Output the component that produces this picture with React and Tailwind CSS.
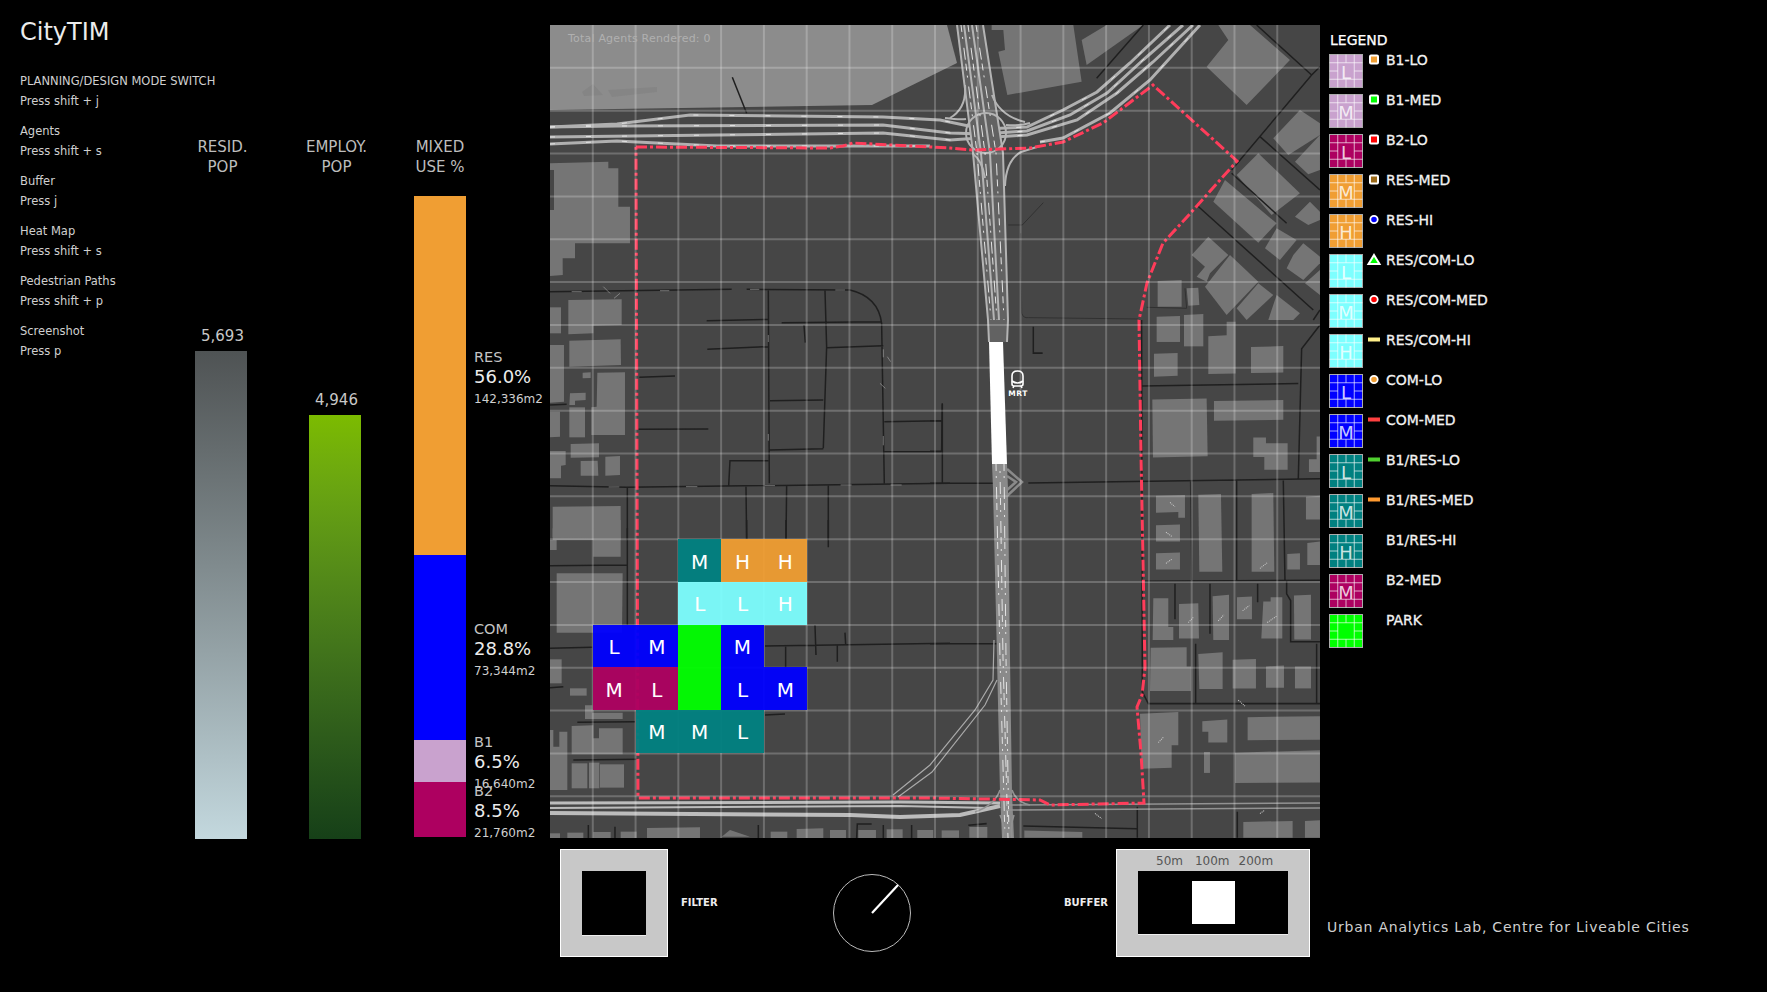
import React from "react";

const help = [
  ["PLANNING/DESIGN MODE SWITCH", "Press shift + j"],
  ["Agents", "Press shift + s"],
  ["Buffer", "Press j"],
  ["Heat Map", "Press shift + s"],
  ["Pedestrian Paths", "Press shift + p"],
  ["Screenshot", "Press p"],
];

const mix = [
  { name: "RES", pct: "56.0%", area: "142,336m2", seg: "h-[359px] bg-[#f09e33]", top: "top-[152px]" },
  { name: "COM", pct: "28.8%", area: "73,344m2", seg: "h-[185px] bg-[#0000ff]", top: "top-[65px]" },
  { name: "B1", pct: "6.5%", area: "16,640m2", seg: "h-[42px] bg-[#c9a2ce]", top: "top-[-7px]" },
  { name: "B2", pct: "8.5%", area: "21,760m2", seg: "h-[55px] bg-[#ad0060]", top: "top-0" },
];

const legend = [
  ["B1-LO", "#c9a2ce", "L", "sq", "#f09e33"],
  ["B1-MED", "#c9a2ce", "M", "sq", "#00ff00"],
  ["B2-LO", "#ad0060", "L", "sq", "#ff0000"],
  ["RES-MED", "#f09e33", "M", "sq", "#9c6a18"],
  ["RES-HI", "#f09e33", "H", "ci", "#0000ff"],
  ["RES/COM-LO", "#7dffff", "L", "tr", "#00ff00"],
  ["RES/COM-MED", "#7dffff", "M", "ci", "#ff0000"],
  ["RES/COM-HI", "#7dffff", "H", "li", "#ffef8a"],
  ["COM-LO", "#0000ff", "L", "ci", "#f09e33"],
  ["COM-MED", "#0000ff", "M", "li", "#ff4040"],
  ["B1/RES-LO", "#008080", "L", "li", "#50d030"],
  ["B1/RES-MED", "#008080", "M", "li", "#ff9a30"],
  ["B1/RES-HI", "#008080", "H", "", ""],
  ["B2-MED", "#ad0060", "M", "", ""],
  ["PARK", "#00ff00", "", "", ""],
];

const tiles = [
  ["col-start-4 row-start-13 bg-[#008080]/95", "M"],
  ["col-start-5 row-start-13 bg-[#f09e33]/95", "H"],
  ["col-start-6 row-start-13 bg-[#f09e33]/95", "H"],
  ["col-start-4 row-start-14 bg-[#7dffff]/95", "L"],
  ["col-start-5 row-start-14 bg-[#7dffff]/95", "L"],
  ["col-start-6 row-start-14 bg-[#7dffff]/95", "H"],
  ["col-start-2 row-start-15 bg-[#0000ff]/95", "L"],
  ["col-start-3 row-start-15 bg-[#0000ff]/95", "M"],
  ["col-start-4 row-start-15 bg-[#00ff00]/95", ""],
  ["col-start-5 row-start-15 bg-[#0000ff]/95", "M"],
  ["col-start-2 row-start-16 bg-[#ad0060]/95", "M"],
  ["col-start-3 row-start-16 bg-[#ad0060]/95", "L"],
  ["col-start-4 row-start-16 bg-[#00ff00]/95", ""],
  ["col-start-5 row-start-16 bg-[#0000ff]/95", "L"],
  ["col-start-6 row-start-16 bg-[#0000ff]/95", "M"],
  ["col-start-3 row-start-17 bg-[#008080]/95", "M"],
  ["col-start-4 row-start-17 bg-[#008080]/95", "M"],
  ["col-start-5 row-start-17 bg-[#008080]/95", "L"],
];

/* Map drawing: shapes are kept in the coordinates of crops, each group re-scales them */
const bZ10 = [
  "55,90 215,88 215,165 130,167 130,190 55,193", "0,112 33,112 33,190 0,190", "58,212 212,208 213,285 58,290",
  "0,225 42,225 42,395 0,398", "98,308 122,307 122,324 98,325", "142,308 225,307 225,495 124,495 124,412 140,410",
  "60,370 107,368 107,390 75,392 75,405 58,405", "58,412 105,412 105,502 58,502", "0,425 30,425 30,500 0,502",
  "62,522 147,520 147,562 62,563", "0,543 47,543 47,585 33,587 33,625 0,625", "92,573 143,572 145,617 92,617",
  "166,560 210,558 210,615 166,617", "8,710 212,708 212,810 8,810", "0,0 37,0 37,15 0,15",
];
const rZ10 = "M0 65 L545 58 M590 58 L900 60 Q985 80 995 160 L1003 640 M655 60 L658 640 M825 60 L830 230 L820 535 M470 152 L655 148 M695 158 L993 155 M472 238 L655 230 M762 165 L766 218 M830 233 L1000 227 M268 322 L375 318 M660 392 L820 390 M265 478 L475 477 M658 540 L820 536 M655 572 L540 572 L536 648 M0 647 L230 652 L1200 640 M232 652 L232 810 M588 650 L590 810 M710 648 L708 810 M835 646 L835 810 M1003 455 L1175 452 M1003 545 L1175 545 M1177 400 L1175 545 M0 405 L50 403";
const mZ10 = "M65 65 H95 M330 62 H358 M600 58 H628 M856 60 H885 M176 651 H208 M408 650 H442 M644 647 H675 M872 645 H905 M1022 645 H1055 M655 195 V216 M655 492 V512 M1000 238 V262 M1000 498 V526 M160 50 L180 70 M192 85 L210 70 M1012 260 L1022 275 M990 340 L1006 355";

const bZ8 = [
  "8,25 130,25 130,0 212,0 212,110 130,110 130,55 8,52", "0,60 20,60 20,90 0,90", "20,160 218,160 216,338 20,338",
  "0,418 35,418 35,490 0,490", "60,505 110,505 110,527 60,527", "105,556 127,556 127,578 218,578 218,597 105,597",
  "0,630 10,630 10,680 28,680 28,635 52,635 52,810 0,810", "65,618 130,616 130,655 147,655 147,625 218,625 218,703 65,703",
  "65,730 112,730 112,805 65,805", "117,728 148,728 148,805 117,805", "150,733 222,733 222,803 150,803",
  "0,940 30,940 30,955 0,955", "52,938 100,938 100,955 52,955", "130,936 182,936 182,955 130,955",
  "212,935 260,935 260,955 212,955", "291,924 450,922 450,955 291,955", "515,950 540,930 600,950",
  "662,935 712,935 712,955 662,955", "740,927 820,925 820,955 740,955", "840,930 888,930 888,955 840,955",
  "925,930 978,930 978,955 925,955", "1010,928 1058,928 1058,955 1010,955", "1102,930 1150,930 1150,955 1102,955",
];
const rZ8 = "M0 137 L232 135 M232 25 L232 315 M0 385 L127 382 M0 503 L40 500 M82 607 L255 605 M70 720 L265 718 M645 378 L1200 370 M795 315 L798 405 M885 338 L887 372 M862 375 L862 425 M707 380 L707 445 M835 0 L835 82 M590 0 L590 60 M708 0 L708 55 M645 585 L705 582 M115 915 L115 955 M195 920 L195 955 M625 915 L625 955 M920 955 L922 912 L965 912 M1000 915 L1000 955 M1085 915 L1085 955";

const bZ6 = ["0,430 175,425 175,445 205,445 205,560 240,560 240,670 75,670 75,715 38,715 38,765 0,768"];

const bZ7 = [
  "185,15 430,15 455,185 232,225 205,95 225,90 220,30 185,30", "455,60 530,15 640,15 470,135",
  "865,15 960,15 1080,120 950,255 830,140 895,60", "1030,355 1110,270 1170,310 1170,345 1075,405",
  "1095,425 1170,345 1170,450 1135,463", "985,400 1110,520 1025,585 920,465", "885,480 1040,610 985,668 850,545",
  "1095,590 1140,545 1170,575 1170,600 1135,615", "1040,625 1100,660 1050,720 1005,685",
  "1120,670 1170,710 1170,730 1120,780 1070,745 1090,705", "835,650 895,705 840,760 830,785 800,770 825,740 785,705",
  "900,705 985,785 890,885 825,800", "985,790 1030,825 950,900 920,865", "1040,825 1110,880 1090,900 1015,900",
  "683,783 755,780 755,860 683,860", "770,805 805,803 808,855 775,857", "680,890 750,888 750,900 680,900",
  "762,885 820,882 820,900 762,900", "1125,790 1170,750 1170,825",
];
const rZ7 = "M1170 140 L1145 165 L905 450 M990 350 L1170 510 M800 555 L1150 870 M905 460 L1070 610 M980 15 L1145 165 M500 175 L640 15 M1170 870 L1150 900";
const tZ7 = "M340 548 L277 615 L235 615 M272 640 L275 880 Q280 895 295 893 L625 897 M650 862 L770 865 M765 805 L770 865";

const bZ9 = [
  "680,0 750,0 750,65 680,65", "762,0 820,0 820,78 762,78", "835,48 890,45 890,5 917,5 917,158 835,160",
  "963,80 1060,77 1060,155 963,157", "672,100 743,98 743,165 672,168", "667,235 830,232 833,403 669,407",
  "852,240 1060,237 1060,295 852,298", "970,348 1008,348 1008,365 1073,365 1073,443 1003,443 1003,405 970,405",
  "1160,345 1170,345 1170,450 1137,450 1137,412 1160,412", "678,520 765,518 765,585 745,585 745,568 678,570",
  "805,517 873,515 877,745 808,745", "965,515 1030,512 1033,745 965,745", "678,607 750,605 750,655 678,655",
  "678,690 750,688 750,738 678,738", "1128,523 1170,520 1170,590 1128,590", "1072,692 1110,690 1110,738 1072,738",
  "1132,660 1170,655 1170,725 1132,725", "670,823 715,823 715,908 730,908 730,947 668,947",
  "747,840 805,838 807,942 747,942", "848,817 897,813 897,947 850,947", "921,820 966,818 966,885 921,885",
  "1000,833 1022,833 1022,820 1057,820 1057,942 994,942", "1092,815 1143,813 1143,945 1093,945",
  "662,970 770,968 770,1025 783,1025 783,1098 660,1098", "805,988 878,983 878,1092 808,1092",
  "908,1005 978,1003 978,1090 908,1090", "1008,1025 1062,1022 1062,1088 1008,1088",
  "1095,1025 1143,1025 1143,1090 1095,1090", "630,1165 745,1160 745,1258 725,1258 725,1325 635,1328",
  "817,1187 892,1182 892,1250 835,1250 835,1218 817,1218", "953,1175 1170,1172 1170,1242 953,1243",
  "822,1278 840,1278 840,1340 822,1340", "915,1280 1170,1273 1170,1368 915,1370",
  "940,1485 1088,1482 1088,1532 940,1532", "1125,1482 1170,1480 1170,1532 1125,1532",
  "35,1510 87,1510 87,1532 35,1532", "118,1500 172,1500 172,1532 118,1532", "283,1510 457,1515 457,1532 283,1532",
];
const rZ9 = "M310 20 L310 98 L338 98 M37 250 L37 483 M0 388 L37 388 M0 298 L37 298 M0 483 L190 483 M295 482 L1170 470 M635 195 L1105 188 M1170 15 L1115 85 L1105 470 M635 0 L637 1100 L655 1135 L1170 1135 M782 475 L785 775 M920 475 L920 770 M1060 475 L1065 770 M640 773 L1170 770 M735 780 L735 885 M840 780 L840 928 M983 780 L983 835 M1070 770 L1070 810 L1082 830 L1082 952 L1170 952 M797 958 L797 1135 M1160 958 L1160 1135 M0 958 L200 958 M622 1440 L622 1532 M922 1455 L922 1532 M115 1495 L170 1490 M280 1497 L620 1505";
const hatch = "M720 540 L735 552 M708 628 L725 640 M708 720 L725 708 M775 895 L790 880 M865 890 L882 872 M938 860 L958 845 M1012 895 L1042 875 M685 1250 L700 1235 M925 1125 L945 1142 M495 1460 L515 1475 M990 1460 L1005 1450 M990 735 L1012 718";

const highways = [
  "M550 127 L617 124 L690 115 L883 117 L940 120 L983 129 L1027 127 L1063 110 L1097 92 L1130 63 L1170 25",
  "M550 127 L617 126 L883 125 L950 133 L983 134 L1027 131 L1070 115 L1107 93 L1143 60 L1183 25",
  "M550 137 L717 135 L883 133 L950 140 L1027 135 L1077 120 L1117 93 L1153 62 L1193 25",
  "M550 144 L617 141 L717 146 L850 146 L930 146",
  "M1040 142 L1063 138 L1110 113 L1150 80 L1200 25",
];

const redLine =
  "M636 147 L830 148 L843 146 L853 143 L950 148 L973 150 L1030 148 L1063 142 L1103 123 L1153 85 L1237 161 L1187 217 L1163 243 L1147 283 L1139 320 L1141 455 L1145 668 L1142 695 L1137 707 L1141 753 L1144 803 L1050 805 L1040 800 L930 798 L638 798 L636 147";

function Polys({ list, fill = "#757575" }) {
  return list.map((p, i) => <polygon key={i} points={p} fill={fill} />);
}

function MapArt() {
  const v = Array.from({ length: 17 }, (_, i) => 550 + 42.78 * (i + 1));
  const h = Array.from({ length: 18 }, (_, i) => 25 + 42.85 * (i + 1));
  return (
    <svg viewBox="550 25 770 813" className="absolute inset-0 w-full h-full">
      <rect x="550" y="25" width="770" height="813" fill="#464646" />
      <polygon points="550,25 947,25 957,63 872,105 550,110" fill="#8c8c8c" />
      <polygon points="582,92 593,84 603,95 584,96" fill="#858585" />
      <polygon points="608,90 657,87 657,92 612,97" fill="#858585" />

      <g transform="translate(550 270) scale(.3333)">
        <Polys list={bZ10} />
        <path d={rZ10} fill="none" stroke="#1f1f1f" strokeWidth="4.5" />
        <path d={mZ10} fill="none" stroke="#b8b8b8" strokeWidth="1.6" />
      </g>
      <g transform="translate(550 520) scale(.3333)">
        <Polys list={bZ8} />
        <path d={rZ8} fill="none" stroke="#1f1f1f" strokeWidth="4.5" />
      </g>
      <g transform="translate(550 20) scale(.3333)">
        <Polys list={bZ6} />
        <rect x="0" y="450" width="12" height="120" fill="#464646" />
        <path d="M547 172 L590 280" fill="none" stroke="#1f1f1f" strokeWidth="4.5" />
      </g>
      <g transform="translate(930 20) scale(.3333)">
        <Polys list={bZ7} />
        <path d={rZ7} fill="none" stroke="#1f1f1f" strokeWidth="4.5" />
        <path d={tZ7} fill="none" stroke="#2c2c2c" strokeWidth="2.5" />
      </g>
      <g transform="translate(930 320) scale(.3333 .338)">
        <Polys list={bZ9} />
        <path d={rZ9} fill="none" stroke="#1f1f1f" strokeWidth="4.5" />
        <path d={hatch} fill="none" stroke="#cfcfcf" strokeWidth="3" strokeDasharray="3 3" />
      </g>

      {/* elevated roads */}
      <g fill="none" stroke="#b0b0b0" strokeWidth="3">
        {highways.map((d, i) => <path key={i} d={d} />)}
      </g>
      <g fill="none" stroke="#f0f0f0" strokeWidth=".8" strokeDasharray="5 31">
        {highways.map((d, i) => <path key={i} d={d} />)}
      </g>
      <polygon points="957,25 983,25 1003,153 1008,320 1007,342 989,342 988,320 973,153" fill="#626262" />
      <polygon points="992,464 1007,464 1008,489 1010,658 1012,793 1014,838 1002,838 1000,793 997,658 993,489" fill="#8a8a8a" />
      <g fill="none" stroke="#b4b4b4" strokeWidth="2">
        <path d="M957 25 L973 153 L988 320 L989 342" />
        <path d="M964 25 L981 153 L994 320" />
        <path d="M972 25 L990 153 L999 320" />
        <path d="M983 25 L1003 153 L1008 320 L1007 342" />
        <circle cx="986" cy="133" r="20" />
        <path d="M966 119 Q960 120 945 118 M1006 125 Q1020 126 1030 123 M965 85 Q967 108 950 118 M992 95 Q1000 116 1025 122" />
        <path d="M973 154 Q982 160 985 178 M1021 152 Q1006 160 1005 186 M1021 152 L1040 146" />
      </g>
      <path d="M1007 469 L1022 482 L1007 496 M1007 476 L1016 482 L1007 490" fill="none" stroke="#8a8a8a" strokeWidth="2.5" />
      <g fill="none" stroke="#e4e4e4" strokeWidth="1" strokeDasharray="7 5 2 9 12 4">
        <path d="M961 25 L977 153 L991 320" />
        <path d="M976 25 L996 153 L1004 320" />
        <path d="M968 25 L985 153 L997 320" />
        <path d="M996 464 L1000 658 L1005 838" />
        <path d="M1004 464 L1006 658 L1009 838" />
        <path d="M1000 470 L1003 658 L1008 838" strokeDashoffset="11" />
      </g>
      <g fill="none" stroke="#a9a9a9" strokeWidth="1.2">
        <path d="M893 795 L930 765 L975 710 L993 680 L994 640" />
        <path d="M898 797 L932 772 L985 705 L997 680" />
      </g>
      <g fill="none" stroke="#bcbcbc">
        <path d="M550 803 L900 802 L1000 803" strokeWidth="3" />
        <path d="M550 808 L900 806 L990 808" strokeWidth="2" />
        <path d="M550 813 L850 815 L900 817 L960 815 L1000 806" strokeWidth="4" />
      </g>
      <g fill="none" stroke="#929292" strokeWidth="1.6">
        <path d="M1007 805 L1320 803" />
        <path d="M1007 810 L1320 808" />
        <path d="M1000 790 Q995 805 975 812 M1012 790 Q1016 802 1030 805 M1000 815 Q1005 825 1003 838 M1014 815 Q1010 825 1012 838" />
      </g>

      <path d={redLine} fill="none" stroke="#ff3c5a" strokeWidth="3" strokeDasharray="11 3 3 3" />

      {/* grid */}
      <g stroke="#fff" strokeOpacity=".22" strokeWidth="2">
        {v.map((x) => <line key={x} x1={x} x2={x} y1="25" y2="838" />)}
        {h.map((y) => <line key={y} y1={y} y2={y} x1="550" x2="1320" />)}
      </g>

      {/* station */}
      <polygon points="989,342 1003,342 1007,464 992,464" fill="#fff" />
      <g fill="none" stroke="#fff" strokeWidth="1.6">
        <path d="M1012 384 V376 Q1012 371 1017.5 371 Q1023 371 1023 376 V384 Q1023 386 1021 386 H1014 Q1012 386 1012 384 Z" />
        <path d="M1012 381 Q1017.5 385 1023 381 M1014 386 L1013 388 M1021 386 L1022 388" />
      </g>
      <text x="1018" y="396" textAnchor="middle" fill="#fff" fontSize="7.5" fontWeight="700" letterSpacing=".5">MRT</text>
    </svg>
  );
}

function Swatch({ color, letter }) {
  return (
    <svg width="34" height="34" viewBox="-.5 -.5 34 34" className="shrink-0">
      <rect x="0" y="0" width="33" height="33" fill={color} stroke="#aaa" strokeWidth="1" />
      <g stroke="#fff" strokeOpacity=".65" strokeWidth="1">
        <path d="M8.25 0 V33 M24.75 0 V33 M0 8.25 H33 M0 24.75 H33" />
        <path d="M16.5 0 V8.25 M16.5 24.75 V33 M0 16.5 H8.25 M24.75 16.5 H33" />
      </g>
      <text x="16.5" y="24.5" textAnchor="middle" fontSize="18" fill="#fff" fillOpacity=".8">{letter}</text>
    </svg>
  );
}

function Marker({ kind, color }) {
  return (
    <svg width="16" height="14" viewBox="0 0 16 14" className="shrink-0">
      {kind === "sq" && <rect x="4" y="2.5" width="8" height="8" rx="1" fill={color} stroke="#fff" strokeWidth="2" />}
      {kind === "ci" && <circle cx="8" cy="6.5" r="3.7" fill={color} stroke="#fff" strokeWidth="1.8" />}
      {kind === "tr" && <polygon points="8,2 13.5,11 2.5,11" fill={color} stroke="#fff" strokeWidth="2" />}
      {kind === "li" && <rect x="2" y="4.5" width="12" height="4" fill={color} />}
    </svg>
  );
}

function GradientBar({ label, header, offset, barClass }) {
  return (
    <div className="w-[52px] h-full flex flex-col items-center shrink-0">
      <div className={`pt-[137px] text-[15px] leading-[20px] text-[#bdbdbd] text-center whitespace-nowrap ${offset}`}>
        <div>{header[0]}</div>
        <div>{header[1]}</div>
      </div>
      <div className="flex-1" />
      <div className={`text-[15px] leading-[20px] mb-[5px] text-[#c8c8c8] ${offset}`}>{label}</div>
      <div className={`w-full ${barClass}`} />
    </div>
  );
}

export default function App() {
  return (
    <div className="w-[1767px] h-[992px] bg-black overflow-hidden font-['DejaVu_Sans',sans-serif] text-white">
      <div className="flex h-[839px]">
        {/* left */}
        <div className="w-[550px] shrink-0 flex">
          <div className="w-[195px] shrink-0 pl-5">
            <h1 className="text-[24px] leading-[30px] mt-[17px] font-normal whitespace-nowrap text-[#ececec]">CityTIM</h1>
            <div className="mt-[24px] flex flex-col gap-[10px]">
              {help.map(([a, b]) => (
                <div key={a} className="text-[11.5px] leading-[20px] text-[#d0d0d0] whitespace-nowrap">
                  <div>{a}</div>
                  <div>{b}</div>
                </div>
              ))}
            </div>
          </div>
          <GradientBar
            label="5,693"
            header={["RESID.", "POP"]}
            offset="ml-[3px]"
            barClass="h-[488px] bg-gradient-to-b from-[#4f5354] to-[#c3d8de]"
          />
          <div className="w-[62px] shrink-0" />
          <GradientBar
            label="4,946"
            header={["EMPLOY.", "POP"]}
            offset="ml-[3px]"
            barClass="h-[424px] bg-gradient-to-b from-[#7cbb00] to-[#164018]"
          />
          <div className="w-[53px] shrink-0" />
          <div className="w-[52px] h-full shrink-0 flex flex-col items-center">
            <div className="pt-[137px] h-[196px] text-[15px] leading-[20px] text-[#bdbdbd] text-center whitespace-nowrap">
              <div>MIXED</div>
              <div>USE %</div>
            </div>
            <div className="w-full flex flex-col">
              {mix.map((m) => (
                <div key={m.name} className={`relative w-full ${m.seg}`}>
                  <div className={`absolute left-full ml-[8px] whitespace-nowrap ${m.top}`}>
                    <div className="text-[14.5px] leading-[19px] text-[#c4c4c4]">{m.name}</div>
                    <div className="text-[18px] leading-[19px] text-[#ececec]">{m.pct}</div>
                    <div className="text-[12px] leading-[27px] text-[#cfcfcf]">{m.area}</div>
                  </div>
                </div>
              ))}
            </div>
          </div>
        </div>

        {/* map */}
        <div className="relative w-[770px] h-[813px] mt-[25px] shrink-0 overflow-hidden">
          <MapArt />
          <div className="absolute inset-x-0 top-[2px] bottom-0 grid grid-cols-[repeat(18,1fr)] grid-rows-[repeat(19,1fr)]">
            {tiles.map(([cls, letter], i) => (
              <div key={i} className={`flex items-center justify-center pt-[2px] text-[20px] text-white ${cls}`}>
                {letter}
              </div>
            ))}
          </div>
          <div className="absolute left-[18px] top-[7px] text-[11px] leading-[14px] tracking-[.2px] text-[#b0b0b0] whitespace-nowrap">
            Total Agents Rendered: 0
          </div>
        </div>

        {/* legend */}
        <div className="ml-[9px] shrink-0">
          <div className="text-[14px] leading-[16px] mt-[32px] ml-[1px] mb-[5.5px] text-white [-webkit-text-stroke:0.25px_#fff]">LEGEND</div>
          <div className="flex flex-col">
            {legend.map(([name, color, letter, kind, mk]) => (
              <div key={name} className="h-[40px] flex items-start">
                <Swatch color={color} letter={letter} />
                <div className="ml-[3px] w-[16px] h-[14px] -mt-[1px] shrink-0">
                  {kind && <Marker kind={kind} color={mk} />}
                </div>
                <div className="ml-[4px] -mt-[1px] text-[14px] leading-[14px] whitespace-nowrap text-[#f2f2f2] [-webkit-text-stroke:0.3px_#f2f2f2]">{name}</div>
              </div>
            ))}
          </div>
        </div>
      </div>

      {/* bottom */}
      <div className="flex pt-[10px] ml-[560px]">
        <div className="w-[108px] h-[108px] shrink-0 bg-[#c8c8c8] border border-white flex items-center justify-center">
          <div className="w-[64px] h-[65px] bg-black border-b border-[#eee]" />
        </div>
        <div className="ml-[13px] w-[38px] self-center text-[10px] font-bold leading-[12px] whitespace-nowrap text-[#eee]">FILTER</div>
        <svg width="80" height="80" viewBox="0 0 80 80" className="ml-[113px] mt-[24px] shrink-0">
          <circle cx="40" cy="40" r="38.5" fill="none" stroke="#bbb" strokeWidth="1" />
          <line x1="40" y1="40" x2="66" y2="12" stroke="#fff" strokeWidth="2.2" />
        </svg>
        <div className="ml-[152px] w-[41px] self-center text-[10px] font-bold leading-[12px] whitespace-nowrap text-[#eee]">BUFFER</div>
        <div className="ml-[11px] w-[194px] h-[108px] shrink-0 bg-[#c8c8c8] border border-white flex flex-col">
          <div className="h-[21px] flex items-center pl-[39px] text-[12px] text-[#555] whitespace-nowrap">
            <span>50m</span>
            <span className="ml-[12px]">100m</span>
            <span className="ml-[9px]">200m</span>
          </div>
          <div className="mx-[21px] h-[64px] bg-black border-b border-[#eee] flex items-center justify-center">
            <div className="w-[43px] h-[43px] bg-white" />
          </div>
        </div>
        <div className="ml-[17px] mt-[68px] text-[14px] leading-[20px] tracking-[.78px] text-[#cfcfcf] whitespace-nowrap">
          Urban Analytics Lab, Centre for Liveable Cities
        </div>
      </div>
    </div>
  );
}
